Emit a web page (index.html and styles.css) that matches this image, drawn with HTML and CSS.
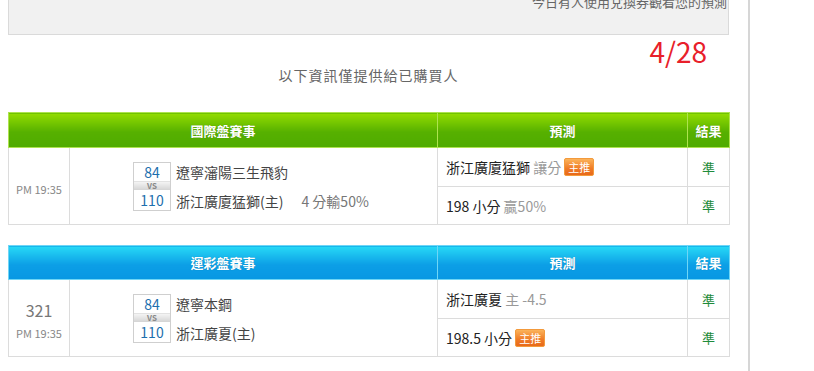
FILE: index.html
```html
<!DOCTYPE html>
<html lang="zh-Hant">
<head>
<meta charset="utf-8">
<title>預測</title>
<link rel="stylesheet" href="styles.css">
</head>
<body>
<div class="page">
  <div class="main">
    <div class="notice">今日有人使用兌換券觀看您的預測</div>
    <div class="date">4/28</div>
    <div class="info">以下資訊僅提供給已購買人</div>

    <table class="games green">
      <colgroup><col class="c1"><col class="c2"><col class="c3"><col class="c4"></colgroup>
      <thead>
        <tr><th colspan="2">國際盤賽事</th><th>預測</th><th>結果</th></tr>
      </thead>
      <tbody>
        <tr class="sub">
          <td rowspan="2" class="time"><div class="clock">PM 19:35</div></td>
          <td rowspan="2" class="match">
            <div class="matchup">
              <div class="scores">
                <div class="score">84</div>
                <div class="vs">VS</div>
                <div class="score">110</div>
              </div>
              <div class="teams">
                <div class="team">遼寧瀋陽三生飛豹</div>
                <div class="team">浙江廣廈猛獅(主)<span class="line">4 分輸50%</span></div>
              </div>
            </div>
          </td>
          <td class="pred">浙江廣廈猛獅 <span class="muted">讓分</span> <span class="badge">主推</span></td>
          <td class="res">準</td>
        </tr>
        <tr class="sub">
          <td class="pred">198 小分 <span class="muted">贏50%</span></td>
          <td class="res">準</td>
        </tr>
      </tbody>
    </table>

    <table class="games blue">
      <colgroup><col class="c1"><col class="c2"><col class="c3"><col class="c4"></colgroup>
      <thead>
        <tr><th colspan="2">運彩盤賽事</th><th>預測</th><th>結果</th></tr>
      </thead>
      <tbody>
        <tr class="sub">
          <td rowspan="2" class="time"><div class="num">321</div><div class="clock">PM 19:35</div></td>
          <td rowspan="2" class="match">
            <div class="matchup">
              <div class="scores">
                <div class="score">84</div>
                <div class="vs">VS</div>
                <div class="score">110</div>
              </div>
              <div class="teams">
                <div class="team">遼寧本鋼</div>
                <div class="team">浙江廣夏(主)</div>
              </div>
            </div>
          </td>
          <td class="pred">浙江廣夏 <span class="muted">主 -4.5</span></td>
          <td class="res">準</td>
        </tr>
        <tr class="sub">
          <td class="pred">198.5 小分 <span class="badge">主推</span></td>
          <td class="res">準</td>
        </tr>
      </tbody>
    </table>
  </div>
  <div class="sidebar"></div>
</div>
</body>
</html>
```
FILE: styles.css
```css
html, body {
  margin: 0;
  padding: 0;
  background: #fff;
  overflow: hidden;
}
body {
  font-family: "Noto Sans CJK TC", "Liberation Sans", sans-serif;
  color: #333;
}
.page {
  display: flex;
  height: 371px;
}
.main {
  width: 721px;
  margin-left: 8px;
}
.sidebar {
  margin-left: 19px;
  width: 0;
  border-left: 2px solid #d6d6d6;
  height: 371px;
}
.notice {
  margin-top: -20px;
  height: 55px;
  box-sizing: border-box;
  background: #f1f1f1;
  border: 1px solid #dadada;
  text-align: right;
  font-size: 13px;
  line-height: 20px;
  padding: 11px 1px 0 0;
  color: #666;
}
.date {
  text-align: right;
  padding-right: 22px;
  font-size: 28px;
  line-height: 30px;
  margin-top: 1px;
  color: #e8202a;
}
.info {
  text-align: center;
  font-size: 14px;
  letter-spacing: 1px;
  line-height: 20px;
  margin-top: -1px;
  margin-bottom: 27px;
  color: #666;
}
.games {
  width: 721px;
  border-collapse: collapse;
  table-layout: fixed;
}
.games + .games {
  margin-top: 20px;
}
.c1 { width: 61px; }
.c2 { width: 368px; }
.c3 { width: 250px; }
.c4 { width: 42px; }
.games th {
  height: 34px;
  padding: 0;
  color: #fff;
  font-size: 13px;
  font-weight: bold;
  text-shadow: 0 0 1px rgba(0,0,0,0.25);
}
.green th {
  background: linear-gradient(#93dc00, #56b000 55%, #4fab00);
  border: 1px solid #aee34f;
}
.blue th {
  height: 33px;
  background: linear-gradient(#27d9f6, #0c9fe6 55%, #0897e3);
  border: 1px solid #6fd6f6;
}
.games td {
  border: 1px solid #dcdcdc;
  padding: 0;
}
.sub:first-child td.pred, .sub:first-child td.res { height: 38px; }
.sub + .sub td.pred, .sub + .sub td.res { height: 37px; }
.time {
  text-align: center;
  color: #888;
}
.clock {
  font-size: 11px;
  line-height: 14px;
  padding-top: 6px;
}
.num {
  font-size: 16px;
  line-height: 18px;
  margin-top: 4px;
  color: #777;
}
.num + .clock { padding-top: 7px; }
.match {
  padding-left: 63px !important;
}
.matchup {
  display: flex;
  align-items: center;
  gap: 5px;
  padding-top: 1px;
}
.scores {
  width: 36px;
  border: 1px solid #cfcfcf;
  text-align: center;
  color: #1c6fae;
  font-size: 14px;
}
.score {
  line-height: 18px;
  height: 18px;
}
.score + .vs + .score { height: 20px; line-height: 20px; }
.vs {
  height: 8px;
  line-height: 8px;
  font-size: 8px;
  font-weight: bold;
  color: #888;
  background: linear-gradient(#f4f4f4, #d4d4d4);
  border-top: 1px solid #e2e2e2;
}
.teams {
  font-size: 14px;
  color: #444;
}
.team {
  line-height: 29px;
}
.line {
  margin-left: 18px;
  color: #777;
}
.pred {
  padding-left: 8px !important;
  font-size: 14px;
  color: #222;
}
.muted {
  color: #999;
}
.badge {
  display: inline-block;
  vertical-align: 1px;
  font-size: 11px;
  line-height: 16px;
  padding: 0 3px;
  color: #fff;
  border: 1px solid #f39a3c;
  border-radius: 2px;
  background: linear-gradient(#fbb35a, #ef7a26 60%, #e86a1a);
}
.res {
  text-align: center;
  font-size: 13px;
  color: #1f8b3b;
}
```
